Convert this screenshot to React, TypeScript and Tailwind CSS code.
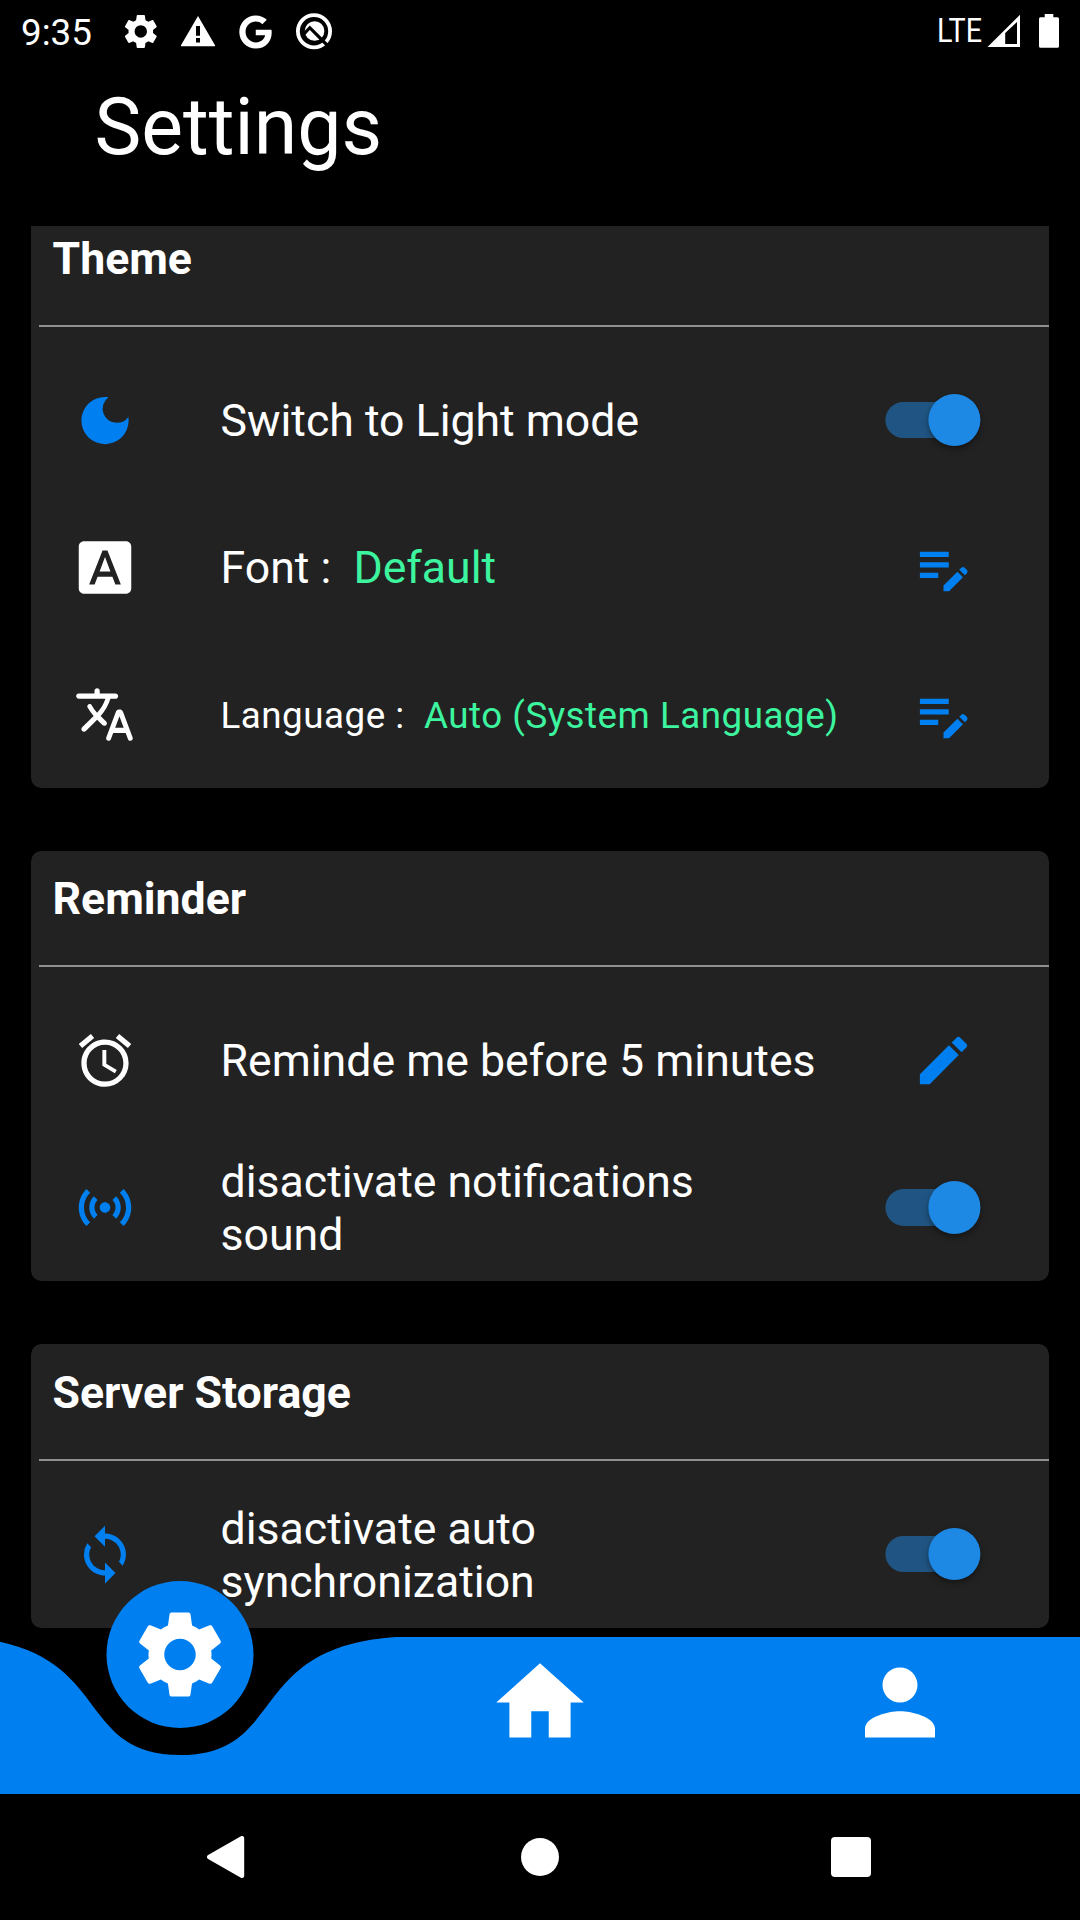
import type { ReactNode } from "react";
import {
  MdAlarm,
  MdDarkMode,
  MdEdit,
  MdEditNote,
  MdHome,
  MdPerson,
  MdSensors,
  MdSettings,
  MdSync,
} from "react-icons/md";
import { FaGoogle } from "react-icons/fa";

function FontIcon() {
  return (
    <svg viewBox="0 0 24 24" fill="currentColor" className="size-[63px]">
      <path d="M9.93 13.5h4.14L12 7.98zM20 2H4c-1.1 0-2 .9-2 2v16c0 1.1.9 2 2 2h16c1.1 0 2-.9 2-2V4c0-1.1-.9-2-2-2zm-4.05 16.5l-1.14-3H9.17l-1.12 3H5.96l5.11-13h1.86l5.11 13h-2.09z" />
    </svg>
  );
}

function TranslateIcon() {
  return (
    <svg viewBox="0 0 24 24" fill="currentColor" className="size-[63px]">
      <path d="M12.65 15.67c.14-.36.05-.77-.23-1.05l-2.09-2.06.03-.03c1.74-1.94 2.98-4.17 3.71-6.53h1.94c.54 0 .99-.45.99-.99v-.02c0-.54-.45-.99-.99-.99H10V3c0-.55-.45-1-1-1s-1 .45-1 1v1H1.99c-.54 0-.99.45-.99.99 0 .55.45.99.99.99h10.18C11.5 7.92 10.44 9.75 9 11.35c-.81-.89-1.49-1.86-2.06-2.88-.16-.29-.45-.47-.78-.47-.69 0-1.13.75-.79 1.35.63 1.13 1.4 2.21 2.3 3.21L3.3 16.87c-.4.39-.4 1.03 0 1.42.39.39 1.02.39 1.42 0L9 14l2.02 2.02c.51.51 1.38.32 1.63-.35zM17.5 10c-.6 0-1.14.37-1.35.94l-3.67 9.8c-.24.61.22 1.26.87 1.26.39 0 .74-.24.88-.61l.89-2.39h4.75l.9 2.39c.14.36.49.61.88.61.65 0 1.11-.65.88-1.26l-3.67-9.8c-.22-.57-.76-.94-1.36-.94zm-1.62 7l1.62-4.33L19.12 17h-3.24z" />
    </svg>
  );
}

function StatusBar() {
  return (
    <div className="flex h-[63px] shrink-0 items-start">
      <span className="ml-[21px] mt-[12px] w-[71px] text-[36.75px] leading-[42px]">9:35</span>
      <MdSettings className="ml-[27.5px] mt-[11px] size-[41px] translate-x-[0.3px]" />
      <svg viewBox="0 0 34 31" className="ml-[20.5px] mt-[16px] h-[31px] w-[34px]">
        <path
          fillRule="evenodd"
          fill="white"
          d="M17 0L34 29.2V30.2H0V29.2zM15 10V19.7H19V10zM15 22V26.5H19V22z"
        />
      </svg>
      <FaGoogle className="ml-[24px] mt-[14.5px] h-[34px] w-[33px]" />
      <svg viewBox="0 0 38 38" className="ml-[23px] mt-[12px] size-[38px]">
        <circle cx="19" cy="19.3" r="16.1" fill="none" stroke="white" strokeWidth="3.8" />
        <circle cx="19.6" cy="19" r="9.8" fill="white" />
        <path d="M8.5 22.5L14.8 15.7L33 34" fill="none" stroke="black" strokeWidth="3.2" />
      </svg>
      <span className="ml-auto mt-[12px] w-[50px] origin-left scale-x-[0.87] text-[33px] leading-[37px]">LTE</span>
      <svg viewBox="0 0 34 34" className="mt-[14px] size-[34px]">
        <path fillRule="evenodd" fill="white" d="M0.5 33L33 0.8V33zM18.2 19V30H30V8z" />
      </svg>
      <svg viewBox="0 0 20 34" className="ml-[18px] mr-[21px] mt-[14px] h-[34px] w-[20px]">
        <path
          fill="white"
          d="M5.7 0h8.6v3.2H18.5a1.5 1.5 0 0 1 1.5 1.5V32.3a1.5 1.5 0 0 1-1.5 1.5H1.5A1.5 1.5 0 0 1 0 32.3V4.7a1.5 1.5 0 0 1 1.5-1.5H5.7z"
        />
      </svg>
    </div>
  );
}

function Toggle() {
  return (
    <div className="mr-[69px] flex h-[52.5px] w-[95px] translate-x-[0.4px] items-center">
      <div className="flex h-[36.75px] w-[87px] items-center justify-end rounded-full bg-[#205583]">
        <div className="-mr-[8px] size-[52.5px] shrink-0 rounded-full bg-[#1e88e5] shadow-[0_3px_6px_rgba(0,0,0,0.4)]" />
      </div>
    </div>
  );
}

function Card({ title, children }: { title: string; children: ReactNode }) {
  return (
    <section className="rounded-[10.5px] bg-[#222222]">
      <h2 className="flex h-[94.5px] items-center pl-[21.5px] pt-[4px] text-[44.625px] font-bold leading-[53px]">
        {title}
      </h2>
      <div className="flex h-[42px] items-center pl-[8px]">
        <div className="h-[2px] w-full bg-[#919191]" />
      </div>
      {children}
    </section>
  );
}

function Row({ icon, children, action }: { icon: ReactNode; children: ReactNode; action: ReactNode }) {
  return (
    <div className="flex h-[147px] items-center">
      <div className="ml-[42px] w-[147.5px] shrink-0 translate-x-[0.5px]">{icon}</div>
      <div className="flex-1 whitespace-pre pt-[2px] text-[44.625px] leading-[53px]">{children}</div>
      {action}
    </div>
  );
}

function BottomNav() {
  return (
    <nav className="relative h-[157.5px] shrink-0">
      <svg viewBox="0 0 1080 157.5" className="absolute inset-0 h-full w-full">
        <path
          fill="#0080f0"
          d="M-36 0C115.2 9.84 72 118.1 180 118.1C288 118.1 244.8 9.84 396 0H1080V157.5H-36z"
        />
      </svg>
      <div className="relative grid translate-x-[0.5px] grid-cols-3 pr-px">
        <div className="-mt-[55.5px] flex size-[147px] items-center justify-center justify-self-center rounded-full bg-[#0080f0]">
          <MdSettings className="size-[105px]" />
        </div>
        <MdHome className="mt-[13.5px] size-[105px] justify-self-center" />
        <MdPerson className="mt-[13.5px] size-[105px] justify-self-center" />
      </div>
    </nav>
  );
}

function SystemNav() {
  return (
    <div className="flex h-[126px] shrink-0 items-center">
      <svg viewBox="0 0 38 42" className="ml-[206.5px] h-[42px] w-[38px]">
        <path d="M2.2 21L35 2.2V39.8z" fill="white" stroke="white" strokeWidth="4.4" strokeLinejoin="round" />
      </svg>
      <div className="ml-[276.5px] size-[38px] rounded-full bg-white" />
      <div className="ml-[272px] size-[40px] rounded-[4px] bg-white" />
    </div>
  );
}

export default function App() {
  const icon = "size-[63px]";
  const blueIcon = "size-[63px] text-[#0080f0]";
  const action = "mr-[74px] size-[63px] text-[#0080f0]";
  return (
    <div className="flex h-[1920px] w-[1080px] flex-col overflow-hidden bg-black font-['Roboto',sans-serif] text-white">
      <StatusBar />
      <h1 className="h-[163px] shrink-0 pl-[94.5px] pt-[17px] text-[78.75px] leading-[94px]">Settings</h1>
      <main className="flex min-h-0 flex-1 flex-col overflow-hidden px-[31px]">
        <div className="-mt-[16px] flex flex-col gap-[63px]">
          <Card title="Theme">
            <Row icon={<MdDarkMode className={blueIcon} />} action={<Toggle />}>
              Switch to Light mode
            </Row>
            <Row icon={<FontIcon />} action={<MdEditNote className={action} />}>
              {"Font :  "}
              <span className="text-[#3df49f]">Default</span>
            </Row>
            <Row icon={<TranslateIcon />} action={<MdEditNote className={action} />}>
              <p className="text-[36.75px] tracking-[0.51px]">
                {"Language :  "}
                <span className="text-[#3df49f]">Auto (System Language)</span>
              </p>
            </Row>
          </Card>
          <Card title="Reminder">
            <Row icon={<MdAlarm className={icon} />} action={<MdEdit className={action} />}>
              Reminde me before 5 minutes
            </Row>
            <Row icon={<MdSensors className={blueIcon} />} action={<Toggle />}>
              {"disactivate notifications\nsound"}
            </Row>
          </Card>
          <Card title="Server Storage">
            <Row icon={<MdSync className={blueIcon} />} action={<Toggle />}>
              <p className="pt-[2px]">{"disactivate auto\nsynchronization"}</p>
            </Row>
          </Card>
        </div>
      </main>
      <BottomNav />
      <SystemNav />
    </div>
  );
}
